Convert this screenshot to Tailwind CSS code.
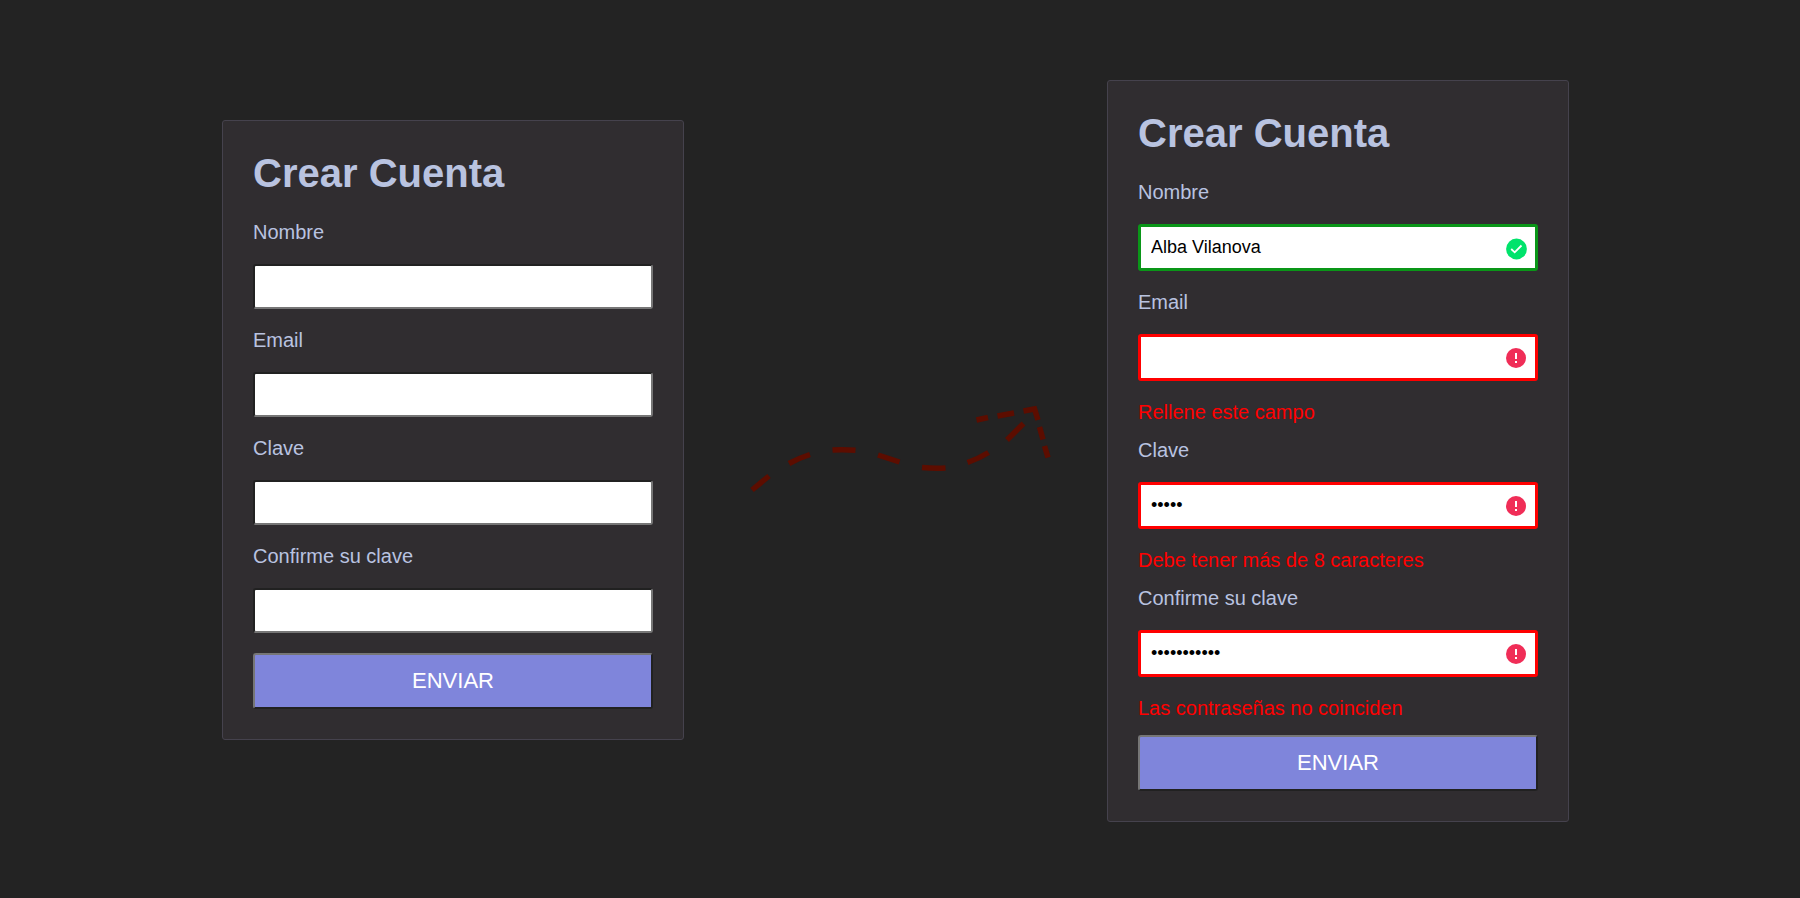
<!DOCTYPE html>
<html lang="es">
<head>
<meta charset="utf-8">
<meta name="viewport" content="width=device-width, initial-scale=1">
<title>Crear Cuenta</title>
<script src="https://cdn.jsdelivr.net/npm/@tailwindcss/browser@4"></script>
</head>
<body class="min-h-screen bg-[#232323] font-['Liberation_Sans',Arial,sans-serif] text-xl/[23px] text-[#b9c3e0]">
<main class="flex min-h-screen items-start justify-center py-20 pr-[9px]">

  <form class="mt-10 w-full max-w-[462px] rounded-[3px] border border-[#45424d] bg-[#302d30] p-[30px]">
    <h1 class="mb-[26px] text-[40px]/[44px] font-bold">Crear Cuenta</h1>
    <div class="flex flex-col gap-5">
      <div class="flex flex-col gap-5">
        <label for="nombre-1">Nombre</label>
        <input id="nombre-1" type="text" class="w-full rounded-[3px] border-2 border-[#767676] [border-style:inset] bg-white p-[10px] text-lg/[21px] text-black">
      </div>
      <div class="flex flex-col gap-5">
        <label for="email-1">Email</label>
        <input id="email-1" type="email" class="w-full rounded-[3px] border-2 border-[#767676] [border-style:inset] bg-white p-[10px] text-lg/[21px] text-black">
      </div>
      <div class="flex flex-col gap-5">
        <label for="clave-1">Clave</label>
        <input id="clave-1" type="password" class="w-full rounded-[3px] border-2 border-[#767676] [border-style:inset] bg-white p-[10px] text-lg/[21px] text-black">
      </div>
      <div class="flex flex-col gap-5">
        <label for="confirme-1">Confirme su clave</label>
        <input id="confirme-1" type="password" class="w-full rounded-[3px] border-2 border-[#767676] [border-style:inset] bg-white p-[10px] text-lg/[21px] text-black">
      </div>
      <button type="button" class="w-full rounded-[3px] border-2 border-[#767676] [border-style:outset] bg-[#7f85db] py-[13px] text-[22px]/[26px] text-white">ENVIAR</button>
    </div>
  </form>

  <svg class="mt-[310px] h-[110px] w-[423px] shrink-0" viewBox="684 390 423 110" fill="none" stroke="#5c0d00" stroke-width="5.500" aria-hidden="true">
    <path d="M752 490L769 476M789 463.500Q799 458 810 454.500M832.500 450Q844 449.300 855.500 450.300M878 455L899.500 462M922 467.500Q934 468.700 945.500 468M967.500 462.500Q979 458.500 988.500 452.500M1007 440L1023.500 423.500"/>
    <path d="M976.500 420L988 417.500M997.500 416L1014 413M1023.500 411L1034.500 409L1038 420M1039.500 427L1043 439.500M1044.500 446L1048 457.500"/>
  </svg>

  <form class="w-full max-w-[462px] rounded-[3px] border border-[#45424d] bg-[#302d30] p-[30px]">
    <h1 class="mb-[26px] text-[40px]/[44px] font-bold">Crear Cuenta</h1>
    <div class="flex flex-col gap-5">
      <label for="nombre-2">Nombre</label>
      <div class="relative flex">
        <input id="nombre-2" type="text" value="Alba Vilanova" class="w-full rounded-[3px] border-3 border-[#0a9618] bg-white p-[10px] text-lg/[21px] text-black">
        <svg class="absolute top-[14px] right-[11px] size-[22px]" viewBox="0 0 22 22" aria-hidden="true"><circle cx="11.500" cy="11" r="10.400" fill="#00e36b"/><path d="M6.200 11L9.700 14.300L16.500 7.500" fill="none" stroke="#fff" stroke-width="1.800"/></svg>
      </div>
      <label for="email-2">Email</label>
      <div class="relative flex">
        <input id="email-2" type="email" class="w-full rounded-[3px] border-3 border-[#ff0000] bg-white p-[10px] text-lg/[21px] text-black">
        <svg class="absolute top-[14px] right-3 size-5" viewBox="0 0 20 20" aria-hidden="true"><circle cx="10" cy="10" r="10" fill="#f02d57"/><path d="M9 5h2v6H9zM9 13h2v2H9z" fill="#fff"/></svg>
      </div>
      <p class="-mb-[5px] text-[#ff0000]">Rellene este campo</p>
      <label for="clave-2">Clave</label>
      <div class="relative flex">
        <input id="clave-2" type="password" value="clave" class="w-full rounded-[3px] border-3 border-[#ff0000] bg-white p-[10px] text-lg/[21px] text-black">
        <svg class="absolute top-[14px] right-3 size-5" viewBox="0 0 20 20" aria-hidden="true"><circle cx="10" cy="10" r="10" fill="#f02d57"/><path d="M9 5h2v6H9zM9 13h2v2H9z" fill="#fff"/></svg>
      </div>
      <p class="-mb-[5px] text-[#ff0000]">Debe tener más de 8 caracteres</p>
      <label for="confirme-2">Confirme su clave</label>
      <div class="relative flex">
        <input id="confirme-2" type="password" value="contrasenas" class="w-full rounded-[3px] border-3 border-[#ff0000] bg-white p-[10px] text-lg/[21px] text-black">
        <svg class="absolute top-[14px] right-3 size-5" viewBox="0 0 20 20" aria-hidden="true"><circle cx="10" cy="10" r="10" fill="#f02d57"/><path d="M9 5h2v6H9zM9 13h2v2H9z" fill="#fff"/></svg>
      </div>
      <p class="-mb-[5px] text-[#ff0000]">Las contraseñas no coinciden</p>
      <button type="button" class="w-full rounded-[3px] border-2 border-[#767676] [border-style:outset] bg-[#7f85db] py-[13px] text-[22px]/[26px] text-white">ENVIAR</button>
    </div>
  </form>

</main>
</body>
</html>
